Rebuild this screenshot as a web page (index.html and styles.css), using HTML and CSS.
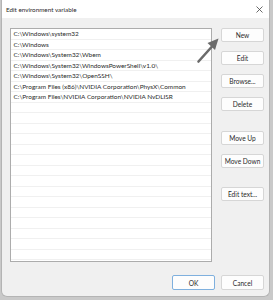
FILE: index.html
```html
<!DOCTYPE html>
<html>
<head lang="en">
    <meta charset="UTF-8">
    <title>Edit environment variable</title>
    <link rel="stylesheet" href="styles.css">
</head>
<body>
<div id="window">
    <div id="titlebar">
        <span class="title">Edit environment variable</span>
        <span class="close">
            <svg width="7" height="7" viewBox="0 0 7 7"><path d="M0.5 0.5L6.5 6.5M6.5 0.5L0.5 6.5" stroke="#444" stroke-width="0.8" fill="none"/></svg>
        </span>
    </div>
    <div id="main">
        <ul id="list">
            <li>C:\Windows\system32</li>
            <li>C:\Windows</li>
            <li>C:\Windows\System32\Wbem</li>
            <li>C:\Windows\System32\WindowsPowerShell\v1.0\</li>
            <li>C:\Windows\System32\OpenSSH\</li>
            <li>C:\Program Files (x86)\NVIDIA Corporation\PhysX\Common</li>
            <li>C:\Program Files\NVIDIA Corporation\NVIDIA NvDLISR</li>
            <li></li><li></li><li></li><li></li><li></li>
            <li></li><li></li><li></li><li></li><li></li>
            <li></li><li></li><li></li><li></li><li></li>
        </ul>
        <div id="buttons">
            <span class="btn">New</span>
            <span class="btn">Edit</span>
            <span class="btn">Browse...</span>
            <span class="btn">Delete</span>
            <span class="btn up">Move Up</span>
            <span class="btn">Move Down</span>
            <span class="btn edit-text">Edit text...</span>
        </div>
    </div>
    <div id="footer">
        <span class="btn ok">OK</span>
        <span class="btn">Cancel</span>
    </div>
    <svg id="arrow" width="30" height="30" viewBox="0 0 30 30">
        <path d="M3.5 27.5L17 12.5" stroke="#6b6b6b" stroke-width="2.6" stroke-linecap="round" fill="none"/>
        <path d="M23.5 4.5L12.5 9L20 16Z" fill="#6b6b6b"/>
    </svg>
</div>
</body>
</html>
```

FILE: styles.css
```css
*{
    margin:0;
    padding:0;
    box-sizing:border-box;
}
ul{
    list-style:none;
}
body{
    background:#c9c9c9;
    font-family:Lato,"Noto Sans",sans-serif;
    color:#2a2a2a;
    padding:0 3px 3px 1px;
}
#window{
    width:269px;
    height:297px;
    background:#f0f0f0;
    border:1px solid #b4b4b4;
    border-top:none;
    border-radius:0 0 6px 6px;
    position:relative;
}
#titlebar{
    height:18px;
    background:#fff;
    display:flex;
    align-items:center;
    justify-content:space-between;
    padding:0 6px 0 4px;
}
#titlebar .title{
    font-size:6.3px;
}
#titlebar .close{
    display:flex;
}
#main{
    display:flex;
    gap:9px;
    padding:10px 5px 0 8px;
}
#list{
    width:202px;
    height:234px;
    background:#fff;
    border:1px solid #acacac;
    overflow:hidden;
}
#list li{
    height:10.5px;
    line-height:10.5px;
    font-size:6.45px;
    padding-left:2.5px;
    border-bottom:1px solid #f0f0f0;
    white-space:nowrap;
}
#buttons{
    display:flex;
    flex-direction:column;
    gap:9px;
}
.btn{
    display:flex;
    align-items:center;
    justify-content:center;
    width:43px;
    height:15px;
    background:#fdfdfd;
    border:1px solid #d6d6d6;
    border-radius:2px;
    font-size:6.6px;
    color:#2a2a2a;
}
#buttons .btn{
    height:14px;
}
#buttons .up{
    margin-top:11px;
}
#buttons .edit-text{
    margin-top:10px;
}
#footer{
    display:flex;
    justify-content:flex-end;
    gap:6px;
    padding:13px 5px 0 0;
}
#footer .ok{
    border-color:#7fb0de;
}
#arrow{
    position:absolute;
    left:193px;
    top:34px;
}
```
